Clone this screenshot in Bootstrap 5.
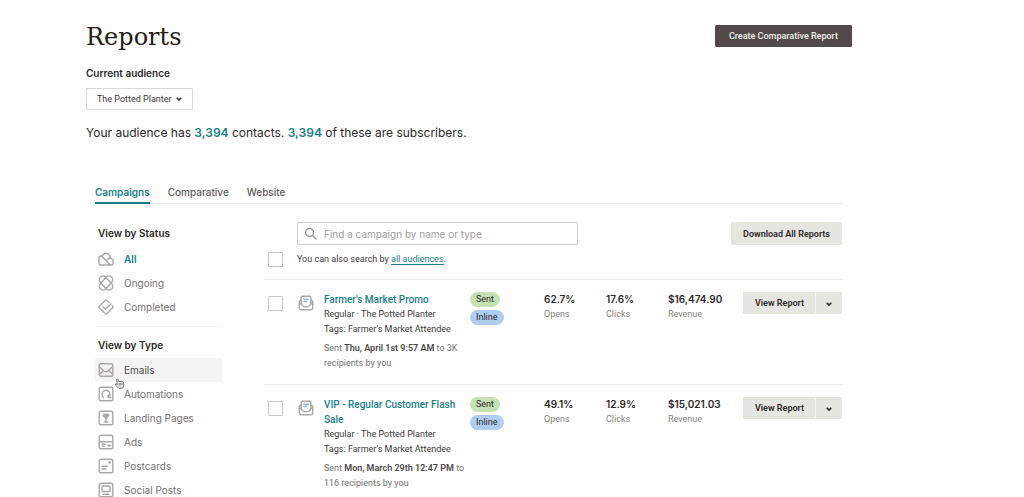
<!DOCTYPE html>
<html lang="en">
<head>
<meta charset="utf-8">
<meta name="viewport" content="width=device-width, initial-scale=1">
<title>Reports</title>
<link href="https://cdn.jsdelivr.net/npm/bootstrap@5.3.0/dist/css/bootstrap.min.css" rel="stylesheet">
<style>
  :root { --teal: #1a7f86; --ink: #2b2927; --soft: #757371; --rule: #e9e9e8; --stone: #e6e6e1; --small-font: Roboto, "Liberation Sans", sans-serif; }
  body { font-family: Inter, "Liberation Sans", sans-serif; font-size: 9px; line-height: 15px; color: #3d3b39; background: #fefefe; overflow-x: hidden; }
  a { color: var(--teal); text-decoration: none; }
  .page { padding: 20px 172px 0 86px; }
  h1 { font-family: "DejaVu Serif", serif; font-size: 24px; line-height: 34px; color: #241c15; }
  h2 { font-size: 10px; line-height: 14px; font-weight: 600; color: var(--ink); padding-left: 3px; }
  .btn { --bs-btn-font-family: var(--small-font); --bs-btn-font-size: 9px; --bs-btn-line-height: 20px; --bs-btn-border-radius: 1px; --bs-btn-padding-y: 0; --bs-btn-padding-x: 11px; white-space: nowrap; }
  .btn-dark { --bs-btn-bg: #524a48; --bs-btn-border-color: #524a48; --bs-btn-color: #f1efed; --bs-btn-font-weight: 500; --bs-btn-padding-x: 13px; margin-top: 5px; }
  .btn-stone { --bs-btn-bg: var(--stone); --bs-btn-border-color: var(--stone); --bs-btn-color: var(--ink); --bs-btn-hover-bg: #dadad4; --bs-btn-font-weight: 600; }
  .btn-audience { --bs-btn-border-color: #d9d9d7; --bs-btn-color: #3d3b39; --bs-btn-padding-x: 10px; --bs-btn-font-weight: 400; }
  .field-label { font-size: 10px; line-height: 14px; font-weight: 600; color: var(--ink); }
  .summary { font-size: 12px; line-height: 18px; color: var(--ink); margin: 14px 0 41px; }
  .summary a { font-weight: 600; }
  .report-area { padding: 0 10px 0 9px; }
  .nav-tabs { --bs-nav-tabs-border-width: 0; border-bottom: 1px solid var(--rule); gap: 18px; }
  .nav-tabs .nav-link { font-size: 10px; line-height: 18px; font-weight: 500; color: #5f5d5b; padding: 0 0 1px; border: 0; border-bottom: 2px solid transparent; margin-bottom: -1px; }
  .nav-tabs .nav-link.active { color: var(--teal); background: none; border-bottom-color: var(--teal); font-weight: 600; }
  .columns { gap: 42px; }
  .filters { width: 127px; flex: none; padding-top: 22px; }
  .filters .nav-link { display: flex; align-items: center; gap: 10px; height: 24px; padding: 0 0 0 3px; font-size: 10px; line-height: 14px; color: var(--soft); border-radius: 2px; }
  .filters .nav-link.active { color: var(--teal); font-weight: 600; }
  .filters .nav-link.hovered { background: #f4f4f4; color: #4b4947; }
  .filters hr { margin: 7px 0 11px; border-color: #d5d5d4; }
  .filters .status-list { padding-top: 7px; }
  .filters .type-list { padding-top: 6px; }
  .glyph { width: 16px; height: 16px; flex: none; fill: none; stroke: #aaa8a5; stroke-width: 1.4; stroke-linecap: round; stroke-linejoin: round; }
  .chevron { width: 6px; height: 6px; fill: none; stroke: currentColor; stroke-width: 1.6; }
  .hand { position: absolute; left: 19px; top: 20px; width: 11px; height: 11px; }
  .results { padding-top: 18px; font-family: var(--small-font); }
  .find { width: 281px; position: relative; }
  .find .form-control { font-family: Inter, "Liberation Sans", sans-serif; height: 23px; font-size: 10px; line-height: 15px; padding: 0 8px 0 26px; border: 1px solid #cfcfcd; border-radius: 1px; background: #fefefe; }
  .find .form-control::placeholder { color: #a09f9d; }
  .find svg { position: absolute; left: 7px; top: 5px; width: 13px; height: 13px; stroke: #999795; }
  .form-check-input { width: 15px; height: 15px; margin: 0; border: 1px solid #c6c5c3; border-radius: 1px !important; background-color: #fefefe; flex: none; }
  .head-tools { padding-left: 33px; }
  .search-note { padding: 7px 0 12px 4px; gap: 14px; border-bottom: 1px solid var(--rule); }
  .search-note a { border-bottom: 1px solid var(--teal); }
  .campaign { display: grid; grid-template-columns: 34px 26px minmax(0, 1fr) 74px 62px 62px 75px 99px; padding: 12px 0 13px; border-bottom: 1px solid var(--rule); }
  .campaign .form-check-input { margin: 4px 0 0 4px; }
  .campaign > .glyph { margin-top: 3px; }
  .campaign h3 { font-size: 10px; line-height: 15px; font-weight: 500; margin: 0; }
  .sent-on { color: var(--soft); margin-top: 4px; }
  .sent-on b { font-weight: 600; color: #4b4947; }
  .tags { gap: 3px; }
  .tag { font-size: 9px; line-height: 15px; border-radius: 8px; padding: 0 6px; color: var(--ink); }
  .tag-sent { background: #c6e1b4; }
  .tag-inline { background: #afcdf0; }
  dt, dd { margin: 0; line-height: 15px; }
  .stat dd { font-family: Inter, "Liberation Sans", sans-serif; font-size: 10px; font-weight: 600; color: var(--ink); }
  .stat dt { font-weight: 400; color: #858381; }
  .btn-split { border-left-color: #f3f3f0; --bs-btn-padding-x: 0; width: 27px; }
  .stretch { flex: 1 1 auto; }
</style>
</head>
<body>
<svg class="d-none" aria-hidden="true">
  <symbol id="i-down" viewBox="0 0 6 6"><path d="M.7 1.8 3 4.1 5.3 1.8"/></symbol>
  <symbol id="i-mail-open" viewBox="0 0 16 16">
    <path d="M3 5 1.3 6.4V13q0 1.7 1.7 1.7h10q1.7 0 1.7-1.7V6.4L13 5M1.500 7.500 5 11q1 .8 3 .8t3-.8l3.500-3.500"/>
    <path d="M3.300 9V2.200q0-1 1-1h7.400q1 0 1 1V9"/>
    <path stroke="#7dbcdc" d="M5.800 4.200h4.400M5.800 6.500h3"/>
  </symbol>
</svg>

<main class="page">
  <header class="d-flex justify-content-between align-items-start">
    <h1 class="m-0">Reports</h1>
    <button type="button" class="btn btn-dark">Create Comparative Report</button>
  </header>

  <div class="field-label mt-2 pt-1 mb-2" id="audience-label">Current audience</div>
  <button type="button" class="btn btn-audience d-inline-flex align-items-center gap-1" aria-labelledby="audience-label audience-value">
    <span id="audience-value">The Potted Planter</span>
    <svg class="chevron"><use href="#i-down"/></svg>
  </button>
  <p class="summary">Your audience has <a href="#">3,394</a> contacts. <a href="#">3,394</a> of these are subscribers.</p>

  <div class="report-area">
    <nav class="nav nav-tabs">
      <a class="nav-link active" href="#">Campaigns</a>
      <a class="nav-link" href="#">Comparative</a>
      <a class="nav-link" href="#">Website</a>
    </nav>

    <div class="columns d-flex align-items-start">
      <aside class="filters">
        <h2 class="mb-0">View by Status</h2>
        <nav class="nav flex-column status-list">
          <a class="nav-link active" href="#">
            <svg class="glyph" viewBox="0 0 16 16"><path d="M3.800 5.200H2.200Q1 5.200 1 6.400V12.800Q1 14 2.200 14H13.800Q15 14 15 12.800V9L12 6.300 8.500 9.500M3.800 5.200 12 13.800"/><path d="M4.200 5.300A4 4 0 0 1 12 6.300"/></svg>
            All</a>
          <a class="nav-link" href="#">
            <svg class="glyph" viewBox="0 0 16 16"><rect x="-3.800" y="-8.200" width="7.600" height="16.400" rx="3.800" transform="translate(8 8) rotate(42)"/><rect x="-3.800" y="-8.200" width="7.600" height="16.400" rx="3.800" transform="translate(8 8) rotate(-42)"/></svg>
            Ongoing</a>
          <a class="nav-link" href="#">
            <svg class="glyph" viewBox="0 0 16 16"><path d="M11 3.500 8.800 1.500q-.8-.7-1.600 0L1.300 7.200q-.7.800 0 1.600l5.900 5.800q.8.700 1.600 0l5.900-5.800q.7-.8 0-1.600l-.5-.5M5 7.800l2.600 2.500 5.400-5.500"/></svg>
            Completed</a>
        </nav>
        <hr>
        <h2 class="mb-0">View by Type</h2>
        <nav class="nav flex-column type-list">
          <a class="nav-link hovered position-relative" href="#">
            <svg class="glyph" viewBox="0 0 16 16"><rect x="1.200" y="1.700" width="13.600" height="12.600" rx="1.800"/><path d="M1.500 4.800 6.300 9.200q1.700 1.200 3.400 0l4.800-4.400M1.500 12.300l3.500-3.500M14.500 12.300l-3.500-3.500"/></svg>
            Emails
            <svg class="hand" viewBox="0 0 11 11"><path d="M2.500 1.200q.9-.9 1.500.3l1 2.200 2.900-.4q1.500.1 1.800 1.600l.2 2.500-1 2.500-4 .6L1.500 7q-.7-1.200.8-1l1 .5z" fill="#e0e0e0" stroke="#6d6d6d" stroke-width=".9"/><path d="M5.300 5.300v2M6.800 5v2M8.200 5v2" stroke="#6d6d6d" stroke-width=".7"/></svg>
          </a>
          <a class="nav-link" href="#">
            <svg class="glyph" viewBox="0 0 16 16"><rect x="1.200" y="1.200" width="13.600" height="13.600" rx="1.800"/><path d="M5.600 11.500A4 4 0 1 1 10.600 11.300M10.300 8.800v2.700h2.200"/></svg>
            Automations</a>
          <a class="nav-link" href="#">
            <svg class="glyph" viewBox="0 0 16 16"><rect x="1.200" y="1.200" width="13.600" height="13.600" rx="1.800"/><path d="M8 8.500 5.600 6Q4.800 4.500 6.300 4.200 7.400 4.100 8 5.200 8.600 4.100 9.700 4.200 11.200 4.500 10.400 6Z" fill="#aaa8a5"/><path d="M8 8.500V11M6.300 12h3.400"/></svg>
            Landing Pages</a>
          <a class="nav-link" href="#">
            <svg class="glyph" viewBox="0 0 16 16"><rect x="1.200" y="1.200" width="13.600" height="13.600" rx="1.800"/><path d="M1.500 7.700h13M4.200 10.300h3M4.200 12.300h2M10 11.500h2.300M11.200 10.500v2"/></svg>
            Ads</a>
          <a class="nav-link" href="#">
            <svg class="glyph" viewBox="0 0 16 16"><rect x="1.200" y="1.200" width="13.600" height="13.600" rx="1.800"/><path d="M4 8.200h5.500M4 11h4M11.200 4h1v1h-1z"/></svg>
            Postcards</a>
          <a class="nav-link" href="#">
            <svg class="glyph" viewBox="0 0 16 16"><rect x="1.200" y="1.200" width="13.600" height="13.600" rx="1.800"/><rect x="4" y="4" width="8" height="5.500" rx=".8"/><path d="M5 12.200h6"/></svg>
            Social Posts</a>
        </nav>
      </aside>

      <section class="results stretch">
        <div class="head-tools d-flex justify-content-between">
          <div class="find">
            <svg class="glyph" viewBox="0 0 13 13"><circle cx="5.500" cy="5.500" r="4"/><path d="m8.500 8.500 3.500 3.500"/></svg>
            <input type="search" class="form-control" placeholder="Find a campaign by name or type" aria-label="Find a campaign by name or type">
          </div>
          <button type="button" class="btn btn-stone">Download All Reports</button>
        </div>
        <div class="search-note d-flex align-items-center">
          <input type="checkbox" class="form-check-input" aria-label="Select all campaigns">
          <span>You can also search by <a href="#">all audiences</a>.</span>
        </div>

        <article class="campaign">
          <input type="checkbox" class="form-check-input" aria-label="Select Farmer's Market Promo">
          <svg class="glyph" viewBox="0 0 16 16"><use href="#i-mail-open"/></svg>
          <div>
            <h3><a href="#">Farmer's Market Promo</a></h3>
            <div>Regular · The Potted Planter</div>
            <div>Tags: Farmer's Market Attendee</div>
            <div class="sent-on">Sent <b>Thu, April 1st 9:57 AM</b> to 3K recipients by you</div>
          </div>
          <div class="tags d-flex flex-column align-items-start">
            <span class="tag tag-sent">Sent</span>
            <span class="tag tag-inline">Inline</span>
          </div>
          <dl class="stat d-flex flex-column-reverse justify-content-end m-0"><dt>Opens</dt><dd>62.7%</dd></dl>
          <dl class="stat d-flex flex-column-reverse justify-content-end m-0"><dt>Clicks</dt><dd>17.6%</dd></dl>
          <dl class="stat d-flex flex-column-reverse justify-content-end m-0"><dt>Revenue</dt><dd>$16,474.90</dd></dl>
          <div class="btn-group align-self-start">
            <button type="button" class="btn btn-stone px-0 stretch">View Report</button>
            <button type="button" class="btn btn-stone btn-split flex-grow-0" aria-label="More actions"><svg class="chevron"><use href="#i-down"/></svg></button>
          </div>
        </article>

        <article class="campaign">
          <input type="checkbox" class="form-check-input" aria-label="Select VIP - Regular Customer Flash Sale">
          <svg class="glyph" viewBox="0 0 16 16"><use href="#i-mail-open"/></svg>
          <div>
            <h3><a href="#">VIP - Regular Customer Flash Sale</a></h3>
            <div>Regular · The Potted Planter</div>
            <div>Tags: Farmer's Market Attendee</div>
            <div class="sent-on">Sent <b>Mon, March 29th 12:47 PM</b> to 116 recipients by you</div>
          </div>
          <div class="tags d-flex flex-column align-items-start">
            <span class="tag tag-sent">Sent</span>
            <span class="tag tag-inline">Inline</span>
          </div>
          <dl class="stat d-flex flex-column-reverse justify-content-end m-0"><dt>Opens</dt><dd>49.1%</dd></dl>
          <dl class="stat d-flex flex-column-reverse justify-content-end m-0"><dt>Clicks</dt><dd>12.9%</dd></dl>
          <dl class="stat d-flex flex-column-reverse justify-content-end m-0"><dt>Revenue</dt><dd>$15,021.03</dd></dl>
          <div class="btn-group align-self-start">
            <button type="button" class="btn btn-stone px-0 stretch">View Report</button>
            <button type="button" class="btn btn-stone btn-split flex-grow-0" aria-label="More actions"><svg class="chevron"><use href="#i-down"/></svg></button>
          </div>
        </article>
      </section>
    </div>
  </div>
</main>
<script src="https://cdn.jsdelivr.net/npm/bootstrap@5.3.0/dist/js/bootstrap.bundle.min.js"></script>
</body>
</html>
